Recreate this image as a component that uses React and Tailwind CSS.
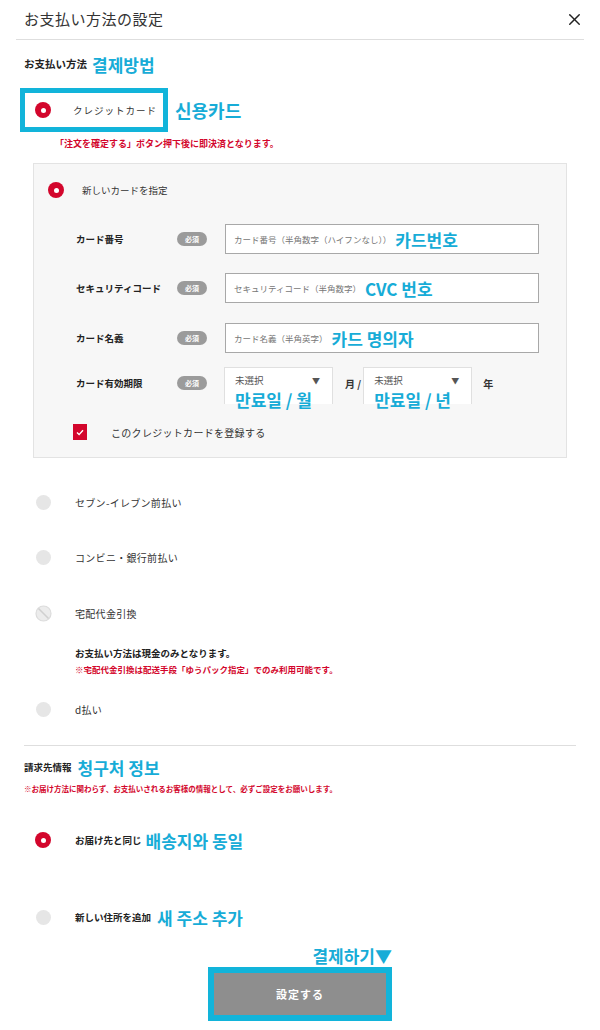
import { X } from "lucide-react";

const RED = "bg-[#d3062c]";

function RadioOn({ size = "w-4 h-4" }) {
  return (
    <span className={`${size} ${RED} rounded-full flex items-center justify-center shrink-0`}>
      <span className="w-[5px] h-[5px] bg-white rounded-full" />
    </span>
  );
}

function RadioOff() {
  return <span className="w-[15px] h-[15px] bg-[#e6e6e6] rounded-full shrink-0" />;
}

function RadioDisabled() {
  return (
    <svg width="17" height="17" viewBox="0 0 17 17" className="shrink-0">
      <circle cx="8.5" cy="8.5" r="7.5" fill="#ececec" stroke="#dcdcdc" strokeWidth="1.2" />
      <line x1="3.5" y1="3.5" x2="13.5" y2="13.5" stroke="#d0d0d0" strokeWidth="1.6" />
    </svg>
  );
}

function Badge() {
  return (
    <span className="w-[30px] h-[14px] rounded-full bg-[#9b9b9b] text-white text-[7px] font-bold flex items-center justify-center">
      必須
    </span>
  );
}

function Field({ label, placeholder, note, mt }) {
  return (
    <div className={`flex items-center ${mt}`}>
      <div className="w-[101px] text-[9.5px] font-bold text-[#222]">{label}</div>
      <Badge />
      <div className="ml-[18px] w-[314px] h-[30px] bg-white border border-[#a8a8a8] flex items-center pl-[8px]">
        <span className="text-[8.5px] text-[#777]">{placeholder}</span>
        <span className="ml-1 text-[17px] font-semibold text-[#17acd7] leading-none">{note}</span>
      </div>
    </div>
  );
}

function SelectBox({ note }) {
  return (
    <div className="w-[109px] h-[37px] bg-white border border-[#e0e0e0] border-b-0 flex flex-col pl-[10px] pr-[12px] pt-[8px]">
      <div className="flex items-center justify-between h-[10px]">
        <span className="text-[9.5px] text-[#555] leading-none">未選択</span>
        <span className="text-[8px] text-[#555] leading-none">▼</span>
      </div>
      <span className="mt-[5px] text-[17px] font-semibold text-[#17acd7] leading-none">{note}</span>
    </div>
  );
}

function Option({ radio, label, mt }) {
  return (
    <div className={`flex items-center h-[20px] ${mt}`}>
      <div className="w-[51px] pl-[12px] flex items-center">{radio}</div>
      <span className="text-[10px] text-[#333] tracking-[0.3px]">{label}</span>
    </div>
  );
}

export default function App() {
  return (
    <div className="w-[600px] h-[1030px] bg-white overflow-hidden text-[#333] font-['Noto_Sans_CJK_JP','Noto_Sans_CJK_KR',sans-serif]">
      {/* header */}
      <div className="mx-4 h-[40px] border-b border-[#dedede] flex items-center justify-between pl-2 pr-0">
        <span className="text-[15px] text-[#333] tracking-[0.5px]">お支払い方法の設定</span>
        <X size={19} strokeWidth={1.8} className="text-[#222]" />
      </div>

      <div className="px-6">
        {/* payment method */}
        <div className="mt-[14px] h-[20px] flex items-center">
          <span className="text-[10.5px] font-bold text-[#222]">お支払い方法</span>
          <span className="ml-[5px] text-[17px] font-semibold text-[#17acd7] leading-none">결제방법</span>
        </div>

        <div className="mt-[14px] -ml-1 flex items-center">
          <div className="w-[148px] h-[44px] border-[5px] border-[#12b4da] flex items-center pl-[10px]">
            <RadioOn />
            <span className="ml-[22px] text-[9.5px] text-[#333] tracking-[1px]">クレジットカード</span>
          </div>
          <span className="ml-[7px] text-[18px] font-semibold text-[#17acd7] leading-none">신용카드</span>
        </div>

        <div className="mt-[5px] pl-[31px] h-[14px] flex items-center">
          <span className="text-[9px] font-bold text-[#d3062c]">「注文を確定する」ボタン押下後に即決済となります。</span>
        </div>

        {/* new card box */}
        <div className="mt-[12px] ml-[9px] w-[534px] bg-[#f7f7f7] border border-[#e3e3e3] pt-[18px] pb-[17px]">
          <div className="flex items-center h-[16px] pl-[14px]">
            <RadioOn />
            <span className="ml-[18px] text-[9.5px] text-[#333]">新しいカードを指定</span>
          </div>

          <div className="pl-[42px]">
            <Field mt="mt-[26px]" label="カード番号" placeholder="カード番号（半角数字（ハイフンなし））" note="카드번호" />
            <Field mt="mt-[19px]" label="セキュリティコード" placeholder="セキュリティコード（半角数字）" note="CVC 번호" />
            <Field mt="mt-[20px]" label="カード名義" placeholder="カード名義（半角英字）" note="카드 명의자" />

            <div className="mt-[14px] flex items-start">
              <div className="w-[101px] h-[32px] flex items-center text-[9.5px] font-bold text-[#222]">カード有効期限</div>
              <div className="h-[32px] flex items-center">
                <Badge />
              </div>
              <div className="ml-[17px] flex items-start">
                <SelectBox note="만료일 / 월" />
                <span className="mt-[9px] ml-[12px] text-[10px] font-bold text-[#333]">月 /</span>
                <div className="ml-[2px]">
                  <SelectBox note="만료일 / 년" />
                </div>
                <span className="mt-[9px] ml-[11px] text-[10px] font-bold text-[#333]">年</span>
              </div>
            </div>

            <div className="mt-[20px] flex items-center">
              <span className={`w-[14px] h-[16px] ${RED} flex items-center justify-center -ml-[3px]`}>
                <svg width="8" height="7" viewBox="0 0 8 7">
                  <path d="M1 3.6 L3.1 5.6 L7 1.2" fill="none" stroke="white" strokeWidth="1.4" />
                </svg>
              </span>
              <span className="ml-[24px] text-[10px] text-[#333] tracking-[0.3px]">このクレジットカードを登録する</span>
            </div>
          </div>
        </div>

        {/* other methods */}
        <Option mt="mt-[34px]" radio={<RadioOff />} label="セブン-イレブン前払い" />
        <Option mt="mt-[35px]" radio={<RadioOff />} label="コンビニ・銀行前払い" />
        <Option mt="mt-[36px]" radio={<div className="-ml-[1px]"><RadioDisabled /></div>} label="宅配代金引換" />

        <div className="pl-[51px]">
          <div className="mt-[23px] h-[14px] flex items-center text-[9.5px] font-bold text-[#222]">お支払い方法は現金のみとなります。</div>
          <div className="mt-[2px] h-[14px] flex items-center text-[8.5px] font-bold text-[#d3062c]">※宅配代金引換は配送手段「ゆうパック指定」でのみ利用可能です。</div>
        </div>

        <Option mt="mt-[23px]" radio={<RadioOff />} label="d払い" />

        {/* billing */}
        <div className="mt-[26px] border-t border-[#dedede]" />

        <div className="mt-[11px] h-[20px] flex items-center">
          <span className="text-[9.5px] font-bold text-[#222]">請求先情報</span>
          <span className="ml-[6px] text-[17px] font-semibold text-[#17acd7] leading-none">청구처 정보</span>
        </div>
        <div className="mt-[6px] h-[12px] flex items-center">
          <span className="text-[7.5px] font-bold text-[#d3062c]">※お届け方法に関わらず、お支払いされるお客様の情報として、必ずご設定をお願いします。</span>
        </div>

        <div className="mt-[35px] flex items-center h-[20px]">
          <div className="w-[51px] pl-[11px] flex items-center">
            <RadioOn />
          </div>
          <span className="text-[9.5px] font-bold text-[#222]">お届け先と同じ</span>
          <span className="ml-[4px] text-[17px] font-semibold text-[#17acd7] leading-none">배송지와 동일</span>
        </div>

        <div className="mt-[57px] flex items-center h-[20px]">
          <div className="w-[51px] pl-[12px] flex items-center">
            <RadioOff />
          </div>
          <span className="text-[9.5px] font-bold text-[#222]">新しい住所を追加</span>
          <span className="ml-[6px] text-[17px] font-semibold text-[#17acd7] leading-none">새 주소 추가</span>
        </div>

        <div className="ml-[184px] w-[184px]">
          <div className="mt-[18px] h-[20px] flex items-center justify-end">
            <span className="text-[17px] font-semibold text-[#17acd7] leading-none">결제하기▼</span>
          </div>
          <div className="mt-[2px] h-[54px] border-[6px] border-[#12b4da]">
            <div className="w-full h-full bg-[#8e8e8e] flex items-center justify-center">
              <span className="text-[11px] font-bold text-white tracking-[1px]">設定する</span>
            </div>
          </div>
        </div>
      </div>
    </div>
  );
}
